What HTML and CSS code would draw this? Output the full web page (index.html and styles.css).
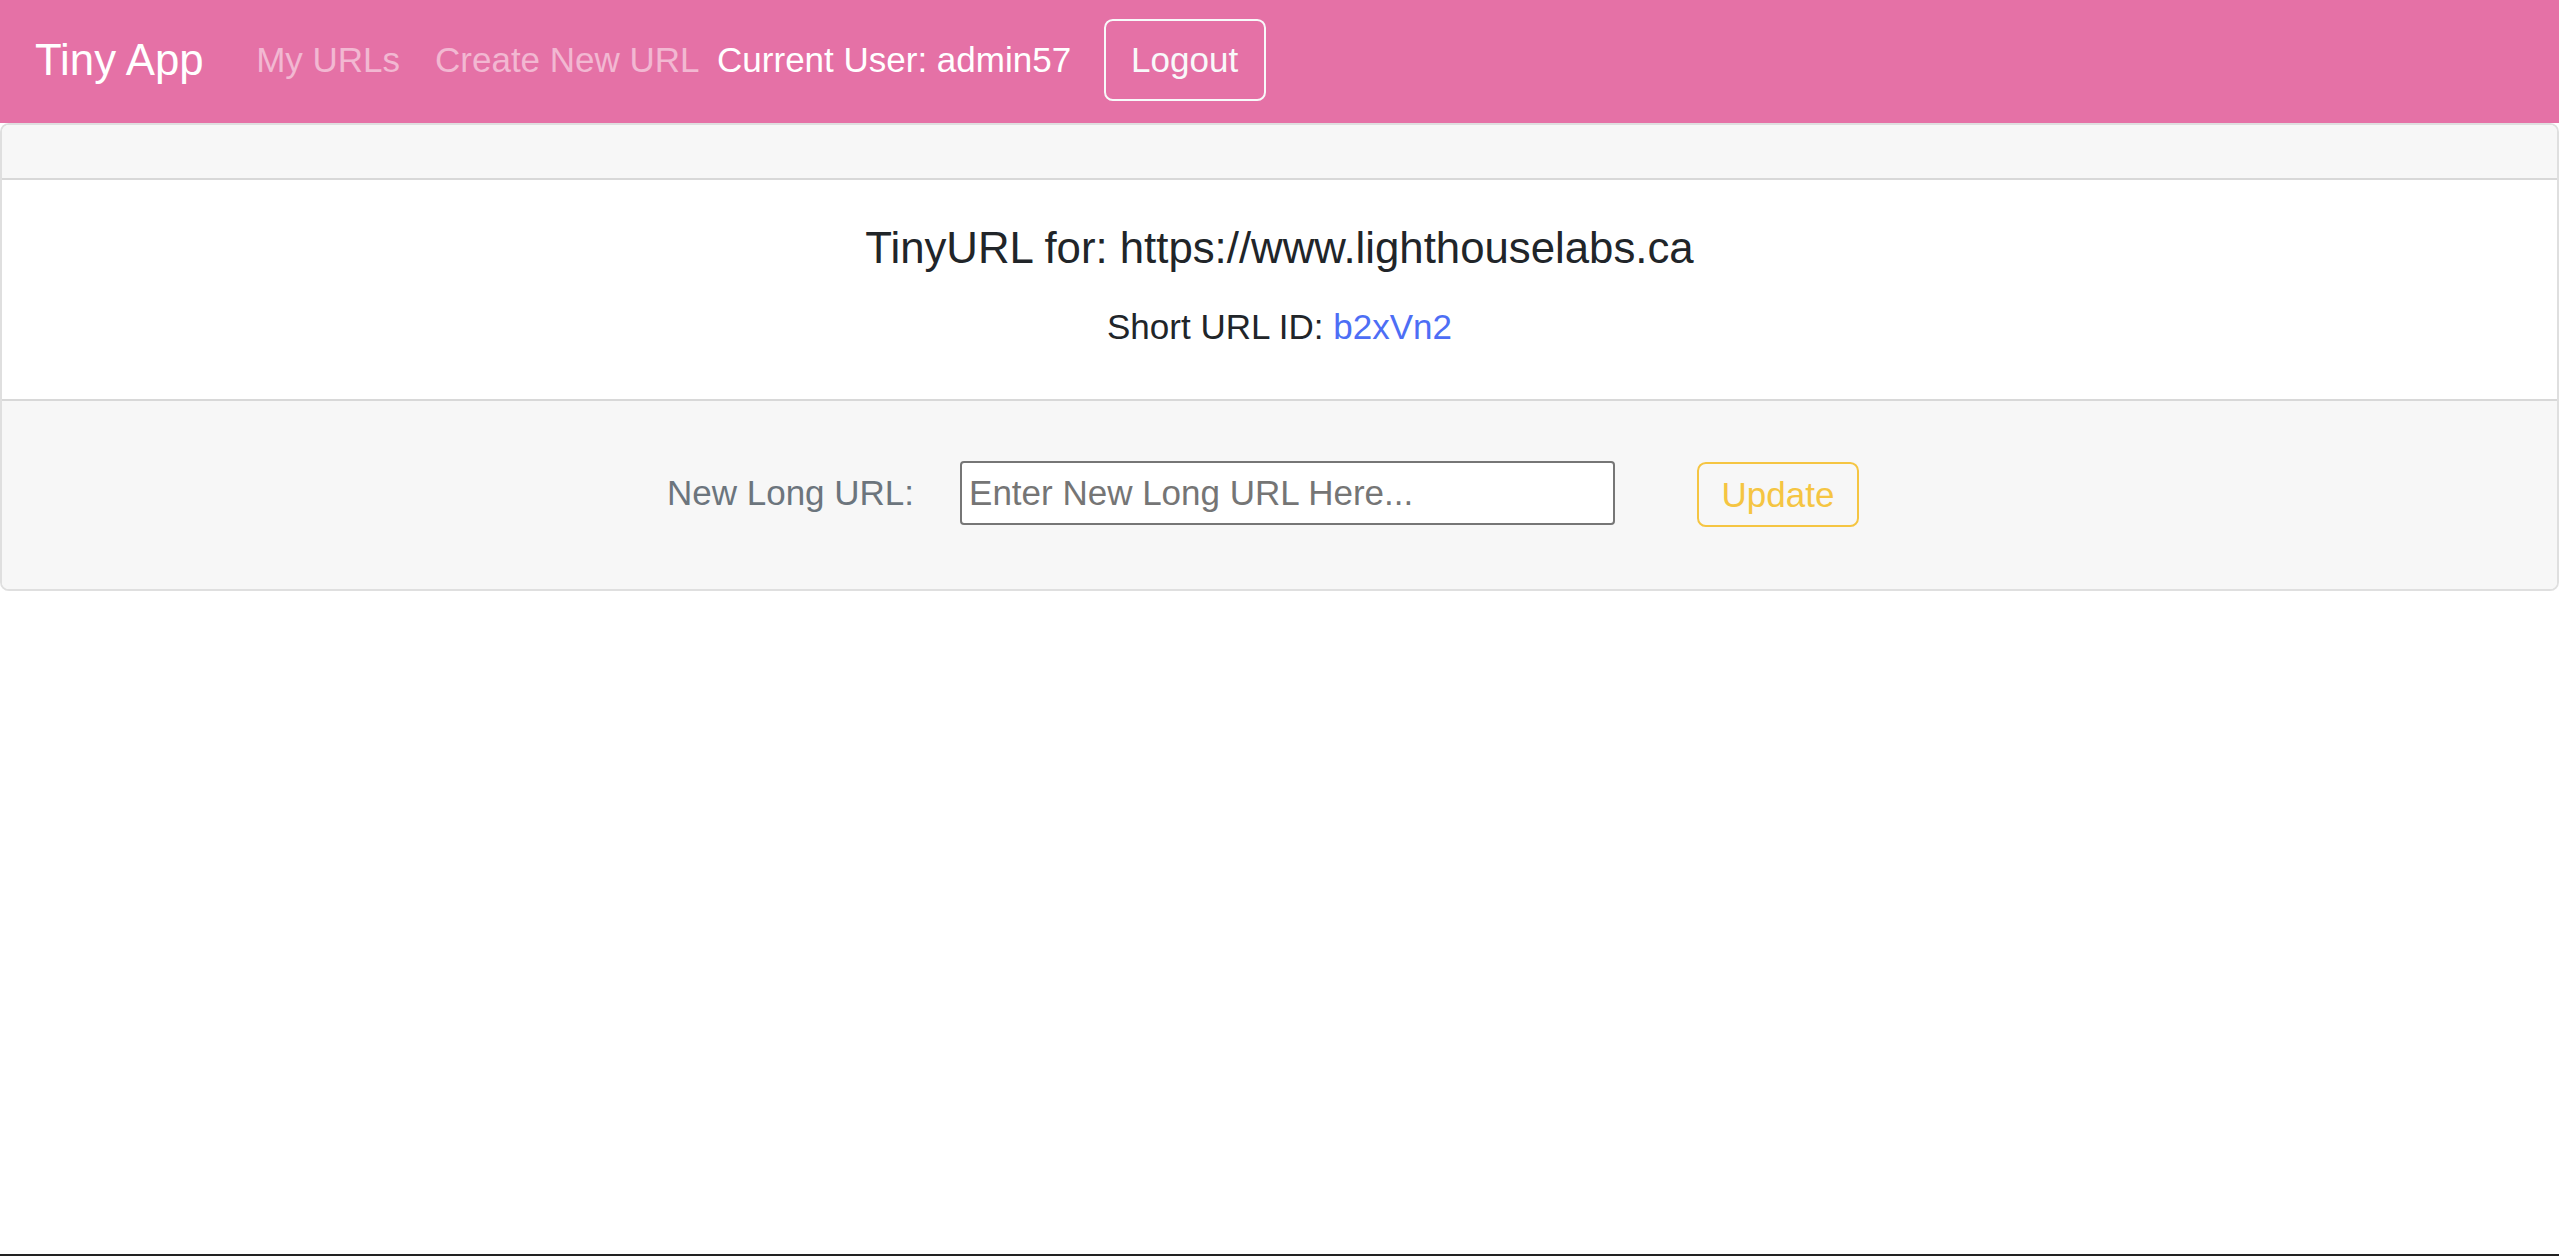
FILE: index.html
```html
<!DOCTYPE html>
<html lang="en">
<head>
<meta charset="utf-8">
<title>Tiny App</title>
<link rel="stylesheet" href="styles.css">
</head>
<body>
<nav class="navbar">
  <a class="brand" href="#">Tiny App</a>
  <div class="nav-links">
    <a class="nav-link" href="#">My URLs</a>
    <a class="nav-link" href="#">Create New URL</a>
  </div>
  <form class="user-form">
    <span class="current-user">Current User: admin57</span>
    <button class="btn btn-logout" type="button">Logout</button>
  </form>
</nav>
<main class="card">
  <div class="card-header"></div>
  <div class="card-body">
    <h5 class="card-title">TinyURL for: https://www.lighthouselabs.ca</h5>
    <p class="card-text">Short URL ID: <a class="short-link" href="#">b2xVn2</a></p>
  </div>
  <div class="card-footer">
    <form class="update-form">
      <label class="update-label" for="longURL">New Long URL:</label>
      <input class="update-input" id="longURL" type="text" placeholder="Enter New Long URL Here...">
      <button class="btn btn-update" type="button">Update</button>
    </form>
  </div>
</main>
<div class="window-edge"></div>
</body>
</html>
```
FILE: styles.css
```css
* { box-sizing: border-box; }
html, body {
  margin: 0;
  padding: 0;
  background: #ffffff;
  font-family: "Liberation Sans", Arial, sans-serif;
  font-size: 35px;
  line-height: 1.5;
  color: #212529;
}
a { text-decoration: none; }

.navbar {
  display: flex;
  align-items: center;
  height: 123px;
  padding: 0 35px 3px 35px;
  background: #e571a6;
}
.brand {
  font-size: 43.75px;
  line-height: 1.5;
  padding: 11px 0;
  margin-right: 35px;
  color: #ffffff;
}
.nav-links {
  display: flex;
}
.nav-link {
  padding: 17.5px 17.5px;
  color: rgba(255, 255, 255, 0.5);
}
.user-form {
  display: flex;
  align-items: center;
  margin: 0;
}
.current-user {
  color: #ffffff;
}
.btn {
  font-family: inherit;
  font-size: 35px;
  line-height: 1.5;
  background: transparent;
  cursor: pointer;
}
.btn-logout {
  margin-left: 32.5px;
  width: 162px;
  height: 82px;
  padding: 0;
  border: 2px solid #f8f9fa;
  border-radius: 8.75px;
  color: #f8f9fa;
}

.card {
  display: block;
  border: 2px solid rgba(0, 0, 0, 0.125);
  border-radius: 8.75px;
  overflow: hidden;
}
.card-header {
  height: 54.5px;
  background: #f7f7f7;
  border-bottom: 2px solid rgba(0, 0, 0, 0.125);
}
.card-body {
  padding: 42.5px 44px 45.5px;
  text-align: center;
}
.card-title {
  margin: 0 0 26.25px;
  font-size: 43.75px;
  font-weight: 400;
  line-height: 1.2;
  color: #212529;
}
.card-text {
  margin: 0;
  color: #212529;
}
.short-link {
  color: #4d6ef5;
}
.card-footer {
  height: 190px;
  background: #f7f7f7;
  border-top: 2px solid rgba(0, 0, 0, 0.125);
  display: flex;
  align-items: center;
  justify-content: center;
  padding-right: 33px;
}
.update-form {
  display: flex;
  align-items: center;
  margin: 0;
}
.update-label {
  color: #6c757d;
  margin-right: 46px;
  margin-bottom: 4px;
}
.update-input {
  width: 655px;
  height: 64px;
  margin-bottom: 3px;
  padding: 2px 7px;
  font-family: inherit;
  font-size: 35px;
  line-height: 1.5;
  color: #212529;
  background: #ffffff;
  border: 2px solid #767676;
  border-radius: 4px;
}
.update-input::placeholder {
  color: #757575;
  opacity: 1;
}
.btn-update {
  margin-left: 82px;
  width: 162px;
  height: 65px;
  padding: 0;
  border: 2px solid #f5c542;
  border-radius: 8.75px;
  color: #f5c542;
}
.window-edge {
  position: fixed;
  left: 0;
  right: 0;
  bottom: 0;
  height: 2px;
  background: #222222;
}
```
